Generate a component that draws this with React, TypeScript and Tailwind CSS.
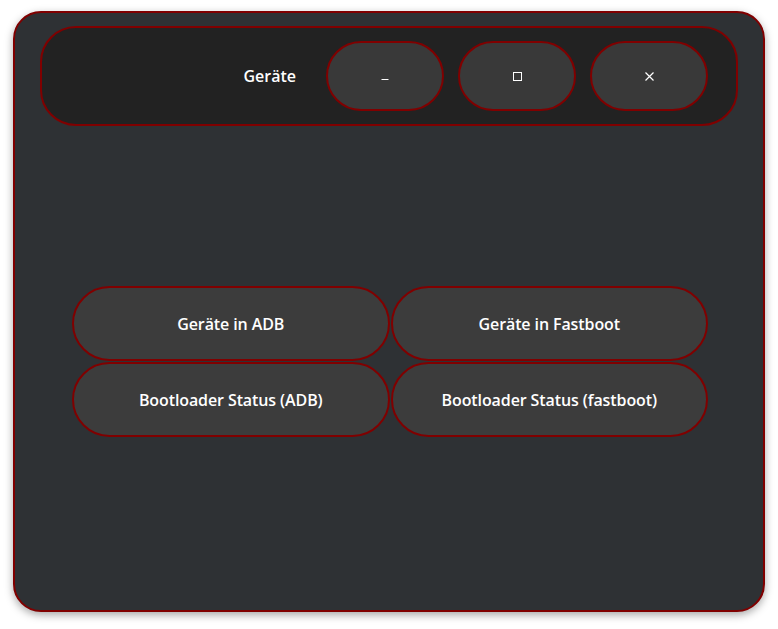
import React from 'react';

const font = { fontFamily: '"Open Sans", "DejaVu Sans", sans-serif' };

const HeaderButton: React.FC<{ children: React.ReactNode }> = ({ children }) => (
  <button className="w-[118px] h-[70px] rounded-full bg-[#393939] border-2 border-[#800000] flex items-center justify-center text-white">
    {children}
  </button>
);

const ActionButton: React.FC<{ label: string }> = ({ label }) => (
  <button className="h-[75px] rounded-full bg-[#3c3c3c] border-2 border-[#800000] flex items-center justify-center text-white text-[16px] font-semibold tracking-[-0.1px]">
    {label}
  </button>
);

export default function App() {
  return (
    <div className="w-[778px] h-[629px] bg-white pt-[11px] pl-[13px]" style={font}>
      <div className="w-[752px] h-[601px] rounded-[28px] border-2 border-[#800000] bg-[#2e3134] shadow-[0_3px_9px_rgba(0,0,0,0.35)] px-[25px] pt-[13px]">
        {/* header bar */}
        <div className="h-[100px] rounded-[36px] bg-[#222222] border-2 border-[#800000] flex items-center justify-end gap-[14px] pr-[28px]">
          <span className="text-white text-[16px] font-semibold mr-[16px]">Geräte</span>
          <HeaderButton>
            <svg width="8" height="8" viewBox="0 0 8 8">
              <path d="M0.5 7.5H7.5" stroke="white" strokeWidth="1" />
            </svg>
          </HeaderButton>
          <HeaderButton>
            <svg width="9" height="9" viewBox="0 0 9 9">
              <rect x="0.5" y="0.5" width="8" height="8" fill="none" stroke="white" strokeWidth="1" />
            </svg>
          </HeaderButton>
          <HeaderButton>
            <svg width="9" height="9" viewBox="0 0 9 9">
              <path d="M0.5 0.5L8.5 8.5M8.5 0.5L0.5 8.5" stroke="white" strokeWidth="1.2" />
            </svg>
          </HeaderButton>
        </div>

        {/* device actions */}
        <div className="mt-[160px] ml-[32px] mr-[30px] grid grid-cols-2 gap-x-[1px] gap-y-[1px]">
          <ActionButton label="Geräte in ADB" />
          <ActionButton label="Geräte in Fastboot" />
          <ActionButton label="Bootloader Status (ADB)" />
          <ActionButton label="Bootloader Status (fastboot)" />
        </div>
      </div>
    </div>
  );
}
